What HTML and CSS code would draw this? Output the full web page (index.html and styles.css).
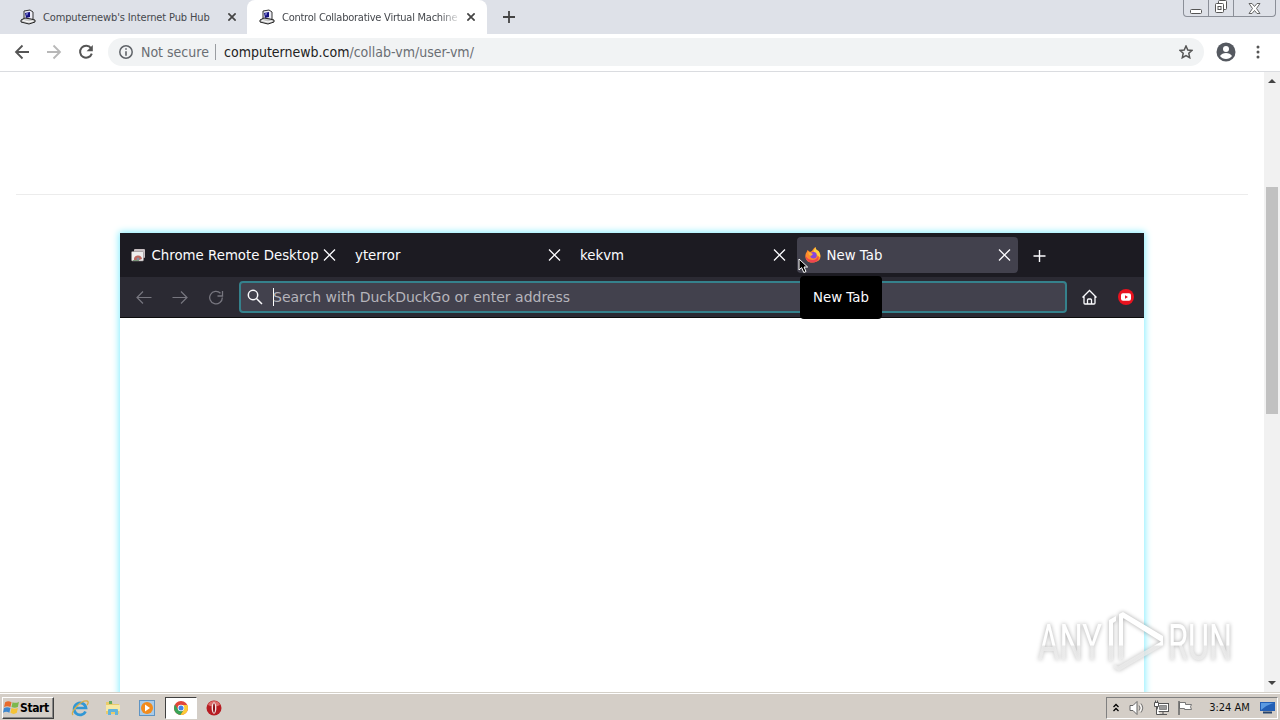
FILE: index.html
```html
<!DOCTYPE html>
<html lang="en">
  <head>
    <meta charset="UTF-8" />
    <title>Control Collaborative Virtual Machines</title>
    <link rel="stylesheet" href="styles.css">
  </head>
  <body>
    <svg class="defs" width="0" height="0">
      <symbol id="pc" viewBox="0 0 16 16">
        <path d="M4 2l6-1 3 2v7l-3 2-6-1z" fill="#ececf4" stroke="#333" />
        <path d="M5 4l5-1v5l-4 1z" fill="#151080" />
        <path d="M6 4.500l2-.5-1 3z" fill="#9ba4ef" />
        <path d="M1 11l4-2 6 1 4 1v2l-6 2-8-2z" fill="#c9c9c9" stroke="#222" />
        <path d="M3 11.500l6 1.500 4-1" fill="none" stroke="#fff" />
      </symbol>
      <symbol id="close" viewBox="0 0 12 12">
        <path d="M.5.5l11 11M11.500.5l-11 11" fill="none" stroke="currentColor" />
      </symbol>
    </svg>

    <div class="tabstrip">
      <div class="tab">
        <svg class="favicon" width="16" height="16"><use href="#pc" /></svg>
        <span class="tab-title">Computernewb's Internet Pub Hub</span>
        <svg class="tab-close" width="8" height="8"><use href="#close" stroke-width="2.600" /></svg>
      </div>
      <div class="tab active">
        <svg class="favicon" width="16" height="16"><use href="#pc" /></svg>
        <span class="tab-title fade">Control Collaborative Virtual Machine</span>
        <svg class="tab-close" width="8" height="8"><use href="#close" stroke-width="2.600" /></svg>
      </div>
      <svg class="new-tab" width="12" height="12" viewBox="0 0 12 12"><path d="M6 0v12M0 6h12" stroke="#444" stroke-width="1.800" /></svg>
      <div class="window-buttons">
        <span class="wb"><svg width="13" height="5" viewBox="0 0 13 5"><rect x=".5" y=".5" width="11" height="4" rx="1" fill="#fff" stroke="#555" /></svg></span>
        <span class="wb"><svg width="14" height="14" viewBox="0 0 14 14" fill="#fff" stroke="#555"><rect x="4.500" y=".5" width="8" height="9" rx="1" /><rect x="1.500" y="3.500" width="8" height="9" rx="1" /><rect x="4" y="6.500" width="3" height="3" /></svg></span>
        <span class="wb wide"><svg width="13" height="11" viewBox="0 0 13 11"><path d="M1 .5h3l2.500 3 2.500-3h3L8.500 5.500 12 10.500H9L6.500 7.500 4 10.500H1l3.500-5z" fill="#fff" stroke="#666" /></svg></span>
      </div>
    </div>

    <div class="toolbar">
      <svg width="16" height="16" viewBox="0 0 16 16" fill="none" stroke="#555" stroke-width="1.800"><path d="M15 8H2M8.500 1.500L2 8l6.500 6.500" /></svg>
      <svg width="16" height="16" viewBox="0 0 16 16" fill="none" stroke="#b8b8b8" stroke-width="1.800"><path d="M1 8h13M7.500 1.500L14 8l-6.500 6.500" /></svg>
      <svg width="16" height="16" viewBox="0 0 16 16"><path d="M13 4.200A6 6 0 1 0 13.800 9.600" fill="none" stroke="#555" stroke-width="2" /><path d="M14.800 1v6.200H8.600z" fill="#555" /></svg>
      <div class="omnibox">
        <svg width="14" height="14" viewBox="0 0 14 14"><circle cx="7" cy="7" r="6.200" fill="none" stroke="#5f6368" stroke-width="1.500" /><path d="M7 3.200v1.600M7 6.200v4.600" stroke="#5f6368" stroke-width="1.600" /></svg>
        <span class="not-secure">Not secure</span>
        <span class="divider"></span>
        <span class="url"><span class="host">computernewb.com</span><span class="path">/collab-vm/user-vm/</span></span>
        <svg class="star" width="14" height="14" viewBox="0 0 14 14"><path d="M7 1l1.800 4 4.200.4-3.200 2.900.9 4.400L7 10.500l-3.700 2.200.9-4.400L1 5.400 5.200 5z" fill="none" stroke="#555" stroke-width="1.500" /></svg>
      </div>
      <svg class="profile" width="20" height="20" viewBox="0 0 20 20"><circle cx="10" cy="10" r="9.500" fill="#555960" /><circle cx="10" cy="7" r="3" fill="#fff" /><path d="M4 14c1.300-2 3.400-3 6-3s4.700 1 6 3c-1.400 1.900-3.500 3-6 3s-4.600-1.100-6-3z" fill="#fff" /></svg>
      <svg class="menu" width="4" height="14" viewBox="0 0 4 14" fill="#555"><circle cx="2" cy="2" r="1.500" /><circle cx="2" cy="7" r="1.500" /><circle cx="2" cy="12" r="1.500" /></svg>
    </div>

    <div class="viewport">
      <div class="page">
        <hr>
        <div class="vm">
          <div class="vm-tabs">
            <div class="vm-tab">
              <svg class="vm-icon" width="16" height="16" viewBox="0 0 16 16"><rect x="4" y="2" width="11" height="9" rx="1" fill="#c8bfc2" /><rect x="1.500" y="4.500" width="12" height="9.500" rx="1" fill="#eee" stroke="#8d8587" stroke-width=".6" /><path d="M4 13a4 4 0 0 1 8-1l-3 1z" fill="#bd6860" /><circle cx="8" cy="12" r="1.500" fill="#8390a2" /><path d="M3 13.500h6" stroke="#799477" /></svg>
              <span>Chrome Remote Desktop</span>
              <svg class="vm-close" width="13" height="12"><use href="#close" stroke-width="1.300" /></svg>
            </div>
            <div class="vm-tab">
              <span>yterror</span>
              <svg class="vm-close" width="13" height="12"><use href="#close" stroke-width="1.300" /></svg>
            </div>
            <div class="vm-tab">
              <span>kekvm</span>
              <svg class="vm-close" width="13" height="12"><use href="#close" stroke-width="1.300" /></svg>
            </div>
            <div class="vm-tab current">
              <svg class="vm-icon" width="16" height="16" viewBox="0 0 16 16">
                <path d="M1 6c1-1 1-2 1.500-3L5 5l2-1c1-2 2-3 3.500-4 0 2 1 3 3 4 2 3 2.500 5 1.500 8-2 4-11 5-13.500 1C-.1 10.500.2 8 1 6z" fill="#ff8a2c" />
                <path d="M.5 9c1 1 3 4 7 4 3 0 5-2 6-4.500.8 4.500-1.700 7-6 7S.8 13 .5 9z" fill="#ee4550" />
                <path d="M10.500 0c0 2 1 3 3 4 1.500 2 2 4.500 1.500 6.500L12 8 8.500 4z" fill="#ffd23e" />
                <circle cx="8.500" cy="8.300" r="3.200" fill="#8746dc" /><path d="M3 5l3 1 2 1-2 2-2-1z" fill="#ffb12e" />
              </svg>
              <span>New Tab</span>
              <svg class="vm-close" width="13" height="12"><use href="#close" stroke-width="1.300" /></svg>
            </div>
            <svg class="vm-plus" width="13" height="13" viewBox="0 0 13 13"><path d="M6.500 1v12M.5 7h12" stroke="#fbfbfe" stroke-width="1.400" /></svg>
          </div>
          <div class="vm-nav">
            <svg width="16" height="16" viewBox="0 0 16 16" fill="none" stroke="#77767f" stroke-width="1.200"><path d="M15.500 8.500H1M7 2.500l-6 6 6 6" /></svg>
            <svg width="16" height="16" viewBox="0 0 16 16" fill="none" stroke="#77767f" stroke-width="1.200"><path d="M.5 8.500H15M9 2.500l6 6-6 6" /></svg>
            <svg width="16" height="16" viewBox="0 0 16 16" fill="none" stroke="#77767f" stroke-width="1.300"><path d="M12.500 4.200A6.300 6.300 0 1 0 14.300 8.500M14.500 2v5h-5" /></svg>
            <div class="vm-search">
              <svg width="16" height="16" viewBox="0 0 16 16" fill="none" stroke="#fbfbfe" stroke-width="1.500"><circle cx="6" cy="6" r="4.700" /><path d="M9.500 9.500l5.500 5.500" /></svg>
              <span class="caret"></span>
              <span class="placeholder">Search with DuckDuckGo or enter address</span>
            </div>
            <svg class="home" width="17" height="16" viewBox="0 0 17 16" fill="none" stroke="#fbfbfe" stroke-width="1.300"><path d="M1.500 8.500l7-7 7 7M3 7.500v6.500q0 1 1 1h9q1 0 1-1V7.500M6.500 15v-4q0-1 1-1h2q1 0 1 1v4" /></svg>
            <svg class="yt" width="16" height="16" viewBox="0 0 16 16"><circle cx="8" cy="8" r="8" fill="#e8121f" /><rect x="3" y="4.200" width="10" height="7.600" rx="2" fill="#fff" /><path d="M7 6.200l3 1.800-3 1.800z" fill="#e8121f" /></svg>
          </div>
          <div class="tooltip">New Tab</div>
          <svg class="cursor" width="13" height="17" viewBox="0 0 13 17"><path d="M1 1v11l2.600-2.400L5.800 14.500l2.200-1L6 9h3.600z" fill="#000" stroke="#fff" /></svg>
        </div>
      </div>
      <div class="scrollbar">
        <svg class="arrow" width="8" height="4" viewBox="0 0 8 4"><path d="M0 4l4-4 4 4z" fill="#444" /></svg>
        <span class="thumb"></span>
        <svg class="arrow down" width="8" height="4" viewBox="0 0 8 4"><path d="M0 0h8L4 4z" fill="#444" /></svg>
      </div>
      <svg class="watermark" width="220" height="76" viewBox="0 0 220 76">
        <defs>
          <linearGradient id="shine" gradientUnits="userSpaceOnUse" x1="0" y1="0" x2="0" y2="66">
            <stop offset=".56" stop-color="#fff" />
            <stop offset=".58" stop-color="#eee" stop-opacity=".75" />
          </linearGradient>
        </defs>
        <g class="wm-text" fill="url(#shine)">
          <text x="2" y="52" textLength="64" lengthAdjust="spacingAndGlyphs">ANY</text>
          <text x="132" y="52" textLength="64" lengthAdjust="spacingAndGlyphs">RUN</text>
        </g>
        <path d="M83 6l4-2 40 24v7L88 10.500l-1-.2v40L83 53zM73 12l7-4v5l-3 2v37l-4 2zM78 56l4 2.500 45-26v5L83 63l-5-3z" fill="url(#shine)" />
      </svg>
    </div>

    <div class="taskbar">
      <div class="start">
        <svg width="17" height="17" viewBox="0 0 16 16"><path d="M2 3q3-2 6 0L7 7.500Q4 6 1 7.500z" fill="#e86b2c" /><path d="M9 3q3 1.500 6-.5L14 7.500q-3 1.500-6 0z" fill="#7cb84d" /><path d="M1 8.500q3-1.500 6 0L6 13q-3-2-6 0z" fill="#3d87cf" /><path d="M8 8.500q3 1.500 6 0L13 13q-3 2-6 0z" fill="#f5c337" /></svg>
        <span>Start</span>
      </div>
      <div class="task">
        <svg width="18" height="18" viewBox="0 0 18 18" fill="none"><path d="M14.500 12.500A6 6 0 1 1 15 9H5" stroke="#3197d5" stroke-width="2.700" /><path d="M2 16C-1 13 10 1 16 2c2 .5 1 3 0 4" stroke="#d9ae46" stroke-width="1.300" /></svg>
      </div>
      <div class="task">
        <svg width="16" height="16" viewBox="0 0 16 16"><path d="M1 2h6l1 2h6v10H1z" fill="#e9cb6b" /><path d="M4 1h3v3H4z" fill="#67a95c" /><path d="M1 5h14v6H1z" fill="#f7e9a5" /><path d="M3 15v-5q0-1 1-1h8q1 0 1 1v5h-3v-3H6v3z" fill="#62b4dc" /></svg>
      </div>
      <div class="task">
        <svg width="16" height="16" viewBox="0 0 16 16"><rect x=".5" y=".5" width="15" height="15" fill="#a9cbe8" stroke="#5f94c3" /><circle cx="8" cy="8" r="6" fill="#f28b1c" /><path d="M6 4.500l5 3.500-5 3.500z" fill="#fff" /></svg>
      </div>
      <div class="task open">
        <svg width="14" height="14" viewBox="0 0 14 14"><circle cx="7" cy="7" r="7" fill="#e2463a" /><path d="M1 3.500A7 7 0 0 0 6.500 14L10 8.500 4 8.500z" fill="#38a457" /><path d="M7 4h6.300A7 7 0 0 1 6.500 14L10 8.500z" fill="#fccb35" /><circle cx="7" cy="7" r="3.300" fill="#fff" /><circle cx="7" cy="7" r="2.500" fill="#4283e8" /></svg>
      </div>
      <div class="task">
        <svg width="16" height="16" viewBox="0 0 16 16"><circle cx="8" cy="8" r="7.500" fill="#b71c22" /><path d="M2 5a6.500 6.500 0 0 1 12 0q-6 3-12 0z" fill="#dd6d6b" /><ellipse cx="8" cy="8" rx="2.400" ry="5.700" fill="#f7e8e8" /><ellipse cx="8" cy="8" rx="1" ry="4.700" fill="#8a1016" /></svg>
      </div>
      <div class="tray">
        <svg width="6" height="9" viewBox="0 0 6 9"><path d="M.5 4L3 1.500 5.500 4M.5 8L3 5.500 5.500 8" fill="none" stroke="#000" stroke-width="1.300" /></svg>
        <svg class="sound" width="17" height="14" viewBox="0 0 17 14"><path d="M1 4.500h3l4-4v13l-4-4H1z" fill="#fff" stroke="#666" /><path d="M10 4.500q2 2.500 0 5M12 2.500q3.500 4.500 0 9" fill="none" stroke="#777" /><path d="M11 3.500q3 3.500 0 7" fill="none" stroke="#fff" /></svg>
        <svg class="net" width="16" height="16" viewBox="0 0 16 16" stroke="#555"><rect x="4.500" y="3.500" width="11" height="8" fill="#fff" /><path d="M6.500 5.500h7v4h-7z" fill="#999" stroke="#888" /><path d="M10 12v3M6 14.500h8" /><path d="M1.500 2.500h4v4h-4zM3.500 7v7.500H7M2.500.5v2M4.500.5v2" fill="#fff" /></svg>
        <svg class="flag" width="16" height="16" viewBox="0 0 16 16"><path d="M2.500 2.500h6v2h6q-2 2 0 5H7.500v-1h-5z" fill="#fff" stroke="#777" /><path d="M2 1v14" stroke="#666" stroke-width="1.500" /></svg>
        <span class="clock">3:24 AM</span>
        <svg width="15" height="13" viewBox="0 0 15 13"><path d="M0 1h15v9H0z" fill="#235fb5" /><path d="M1 2h13Q6 4 1 9z" fill="#5b9ae1" /><path d="M3 11.500h9" stroke="#26446d" stroke-width="2" /></svg>
      </div>
    </div>
  </body>
</html>
```
FILE: styles.css
```css
* {
  box-sizing: border-box;
}
body {
  display: flex;
  flex-direction: column;
  width: 1280px;
  height: 720px;
  margin: 0;
  overflow: hidden;
  font-family: 'DejaVu Sans Condensed', 'DejaVu Sans', sans-serif;
  font-size: 11px;
  background-color: #fff;
}
svg {
  display: block;
  flex: none;
}
.defs {
  position: absolute;
}

/* browser tabs */
.tabstrip {
  display: flex;
  align-items: center;
  flex: none;
  height: 34px;
  background-color: #dee1e8;
}
.tab {
  display: flex;
  align-items: center;
  width: 240px;
  height: 34px;
  padding: 0 12px;
  color: #45484d;
}
.tab:first-child {
  width: 247px;
  padding: 0 11px 0 20px;
}
.tab.active {
  background-color: #fff;
  border-radius: 8px 8px 0 0;
}
.tab-title {
  flex: 1;
  margin: 0 6px 0 7px;
  letter-spacing: -.13px;
  white-space: nowrap;
}
.tab-title.fade {
  letter-spacing: -.25px;
  -webkit-mask-image: linear-gradient(to right, #000 88%, transparent);
  mask-image: linear-gradient(to right, #000 88%, transparent);
}
.tab-close {
  color: #444;
}
.new-tab {
  margin-left: 16px;
}
.window-buttons {
  display: flex;
  align-self: flex-start;
  height: 17px;
  margin-left: auto;
  margin-right: 4px;
  border: 1px solid #8b8f98;
  border-top: 0;
  border-radius: 0 0 4px 4px;
}
.wb {
  display: flex;
  align-items: flex-end;
  justify-content: center;
  width: 25px;
  padding-bottom: 2px;
  border-right: 1px solid #8b8f98;
}
.wide {
  width: 41px;
  border-right: 0;
}

/* address bar */
.toolbar {
  display: flex;
  align-items: center;
  flex: none;
  gap: 16px;
  height: 38px;
  padding: 0 20px 2px 14px;
  border-bottom: 1px solid #dadce0;
}
.omnibox {
  display: flex;
  align-items: center;
  flex: none;
  width: 1096px;
  height: 28px;
  margin-left: -2px;
  padding: 0 11px;
  border-radius: 14px;
  background-color: #f1f3f4;
  font-size: 14px;
  color: #6a6e73;
}
.not-secure {
  width: 67px;
  margin-left: 8px;
  white-space: nowrap;
}
.divider {
  width: 1px;
  height: 16px;
  margin: 0 8px 0 7px;
  background-color: #9a9da1;
}
.host {
  color: #222;
}
.star {
  margin-left: auto;
}
.profile {
  margin-left: -4px;
}
.menu {
  margin-left: 4px;
}

/* page */
.viewport {
  display: flex;
  flex: none;
  position: relative;
  height: 620px;
  overflow: hidden;
}
.page {
  flex: 1;
  padding: 122px 16px 0;
}
hr {
  height: 1px;
  margin: 0 0 38px;
  border: 0;
  background-color: #ececec;
}
.vm {
  position: relative;
  width: 1024px;
  height: 480px;
  margin: 0 auto;
  background-color: #fff;
  box-shadow: 0 0 7px 1px #83edff;
  font-family: 'DejaVu Sans', sans-serif;
  font-size: 13.33px;
  color: #fbfbfe;
}
.vm-tabs {
  display: flex;
  align-items: center;
  height: 44px;
  background-color: #1c1b22;
}
.vm-tab {
  display: flex;
  align-items: center;
  width: 221px;
  height: 36px;
  margin: 0 2px;
  padding: 0 7px 0 8px;
  border-radius: 4px;
  white-space: nowrap;
}
.current {
  background-color: #42414d;
}
.vm-icon {
  margin-right: 5.500px;
}
.vm-close {
  margin-left: auto;
}
.vm-plus {
  margin-left: 13px;
}
.vm-nav {
  display: flex;
  align-items: center;
  gap: 20px;
  height: 41px;
  padding: 0 10px 0 16px;
  background-color: #2b2a33;
  border-bottom: 1px solid #0c0c0d;
}
.vm-search {
  display: flex;
  align-items: center;
  width: 828px;
  height: 32px;
  margin-left: -5px;
  padding: 0 6px;
  border: 2px solid #35818c;
  border-radius: 4px;
  background-color: #42414d;
}
.caret {
  width: 1px;
  height: 18px;
  margin-left: 10px;
  background-color: #fff;
}
.placeholder {
  margin-left: -1px;
  font-size: 14px;
  color: #b5b4bb;
  white-space: nowrap;
}
.home {
  margin-left: -6px;
}
.tooltip {
  position: absolute;
  top: 43px;
  left: 680px;
  width: 82px;
  height: 43px;
  border-radius: 4px;
  background-color: #000;
  line-height: 43px;
  text-align: center;
}
.cursor {
  position: absolute;
  top: 25px;
  left: 678px;
}
.scrollbar {
  display: flex;
  flex-direction: column;
  align-items: center;
  width: 16px;
  padding: 7px 0;
  background-color: #f1f1f1;
}
.thumb {
  width: 12px;
  height: 227px;
  margin-top: 104px;
  background-color: #c1c1c1;
}
.down {
  margin-top: auto;
}
.watermark {
  position: absolute;
  top: 536px;
  left: 1036px;
  overflow: visible;
  filter: drop-shadow(0 0 2px rgba(0, 0, 0, .35));
}
.wm-text {
  font: 50px Roboto, sans-serif;
}

/* taskbar */
.taskbar {
  display: flex;
  align-items: center;
  height: 28px;
  padding: 2px 2px 0;
  border-top: 1px solid #d4d0c8;
  background-color: #d4cec7;
  box-shadow: inset 0 1px #fff;
}
.start {
  display: flex;
  align-items: center;
  width: 52px;
  height: 22px;
  margin-right: 9.500px;
  padding-left: 0;
  border: 1px solid;
  border-color: #fff #404040 #404040 #fff;
  box-shadow: inset -1px -1px #888;
  font-size: 12px;
  font-weight: bold;
  letter-spacing: -.4px;
}
.task {
  display: flex;
  align-items: center;
  justify-content: center;
  width: 32px;
  height: 22px;
  margin-right: 1.700px;
}
.open {
  border: 1px solid;
  border-color: #404040 #fff #fff #404040;
  background-color: #fff;
}
.tray {
  display: flex;
  align-items: center;
  width: 172px;
  height: 22px;
  margin-left: auto;
  padding: 0 2px 0 6px;
  border: 1px solid;
  border-color: #808080 #fff #fff #808080;
}
.sound {
  margin-left: 10px;
}
.net {
  margin-left: 7px;
}
.flag {
  margin-left: 8px;
}
.clock {
  margin: 0 auto;
  padding-left: 6px;
  color: #111;
  white-space: nowrap;
}
```
